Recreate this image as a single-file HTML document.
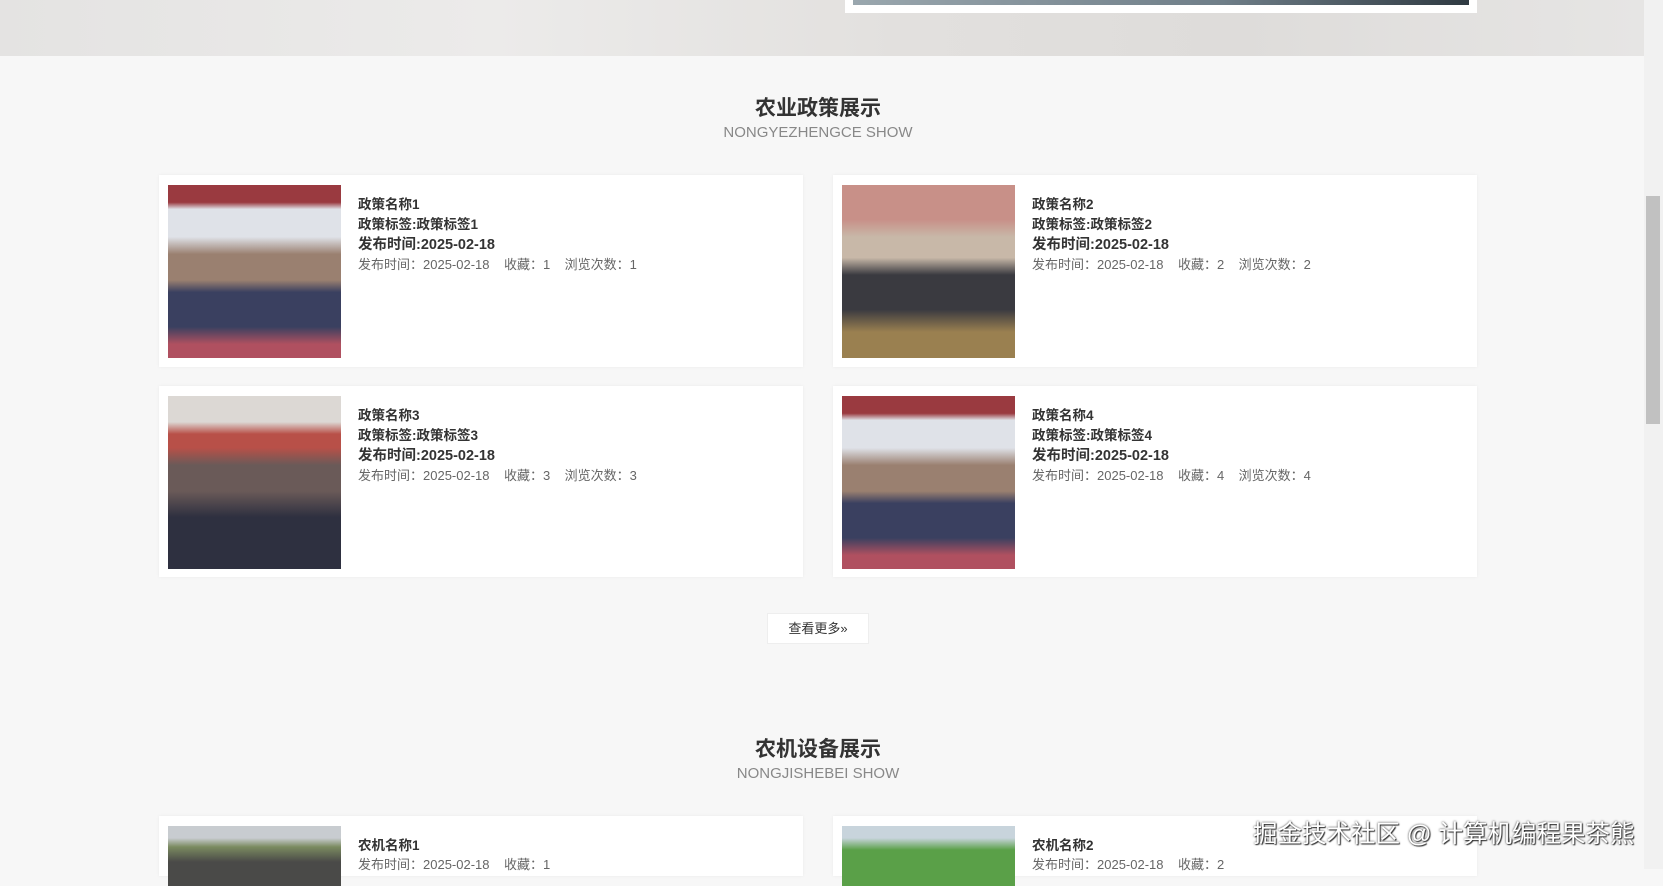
<!DOCTYPE html>
<html><head><meta charset="utf-8">
<style>
*{margin:0;padding:0;box-sizing:border-box}
body{width:1663px;height:869px;overflow:hidden;background:#f7f7f7;font-family:"Liberation Sans","Noto Sans CJK SC",sans-serif;position:relative}
.banner{position:absolute;left:0;top:0;width:1644px;height:56px;background:linear-gradient(90deg,#e4e3e2,#ecebea 30%,#e2e0de 55%,#dedcda 75%,#e6e5e4);}
.bbox{position:absolute;left:845px;top:0;width:632px;height:13px;background:#fff}
.bbox i{position:absolute;left:8px;right:8px;top:0;height:5px;background:linear-gradient(90deg,#9aa7ae,#6f7e88 60%,#2f3a42)}
.sb{position:absolute;left:1644px;top:0;width:19px;height:869px;background:#f1f1f1}
.sb i{position:absolute;left:2px;width:14px;top:196px;height:228px;background:#c1c1c1}
h2{position:absolute;left:0;width:1636px;text-align:center;font-size:21px;color:#333;font-weight:bold}
.sub{position:absolute;left:0;width:1636px;text-align:center;font-size:15px;color:#888}
.card{position:absolute;width:644px;background:#fff;box-shadow:0 0 3px rgba(0,0,0,.06)}
.img{position:absolute;left:9px;top:10px;width:173px;height:173px}
.t{position:absolute;left:199px;font-size:13.5px;color:#333}
.b{font-weight:bold}
.g{color:#666;font-size:13px}
.btn{position:absolute;left:767px;top:613px;width:102px;height:31px;background:#fff;border:1px solid #eee;font-size:13px;color:#333;text-align:center;line-height:29px}
.wm{position:absolute;left:1253px;top:815px;font-size:24.5px;color:#fff;text-shadow:0 0 2px #333,1px 1px 1px #333;white-space:nowrap}
</style></head><body>
<div class="banner"><div class="bbox"><i></i></div></div>
<div class="sb"><i></i></div>
<h2 style="top:92px">农业政策展示</h2>
<div class="sub" style="top:124px">NONGYEZHENGCE SHOW</div>

<div class="card" style="left:159px;top:175px;height:192px">
<div class="img" style="background:linear-gradient(180deg,#9a3a40 0 10%,#dfe2e8 14% 30%,#9a8070 40% 55%,#3a4060 62% 82%,#b05060 92%)"></div>
<div class="t b" style="top:18px">政策名称1</div><div class="t b" style="top:38px">政策标签:政策标签1</div><div class="t b" style="top:58px;font-size:14.5px">发布时间:2025-02-18</div><div class="t g" style="top:79px">发布时间：2025-02-18 &nbsp;&nbsp; 收藏：1 &nbsp;&nbsp; 浏览次数：1</div></div>

<div class="card" style="left:833px;top:175px;height:192px">
<div class="img" style="background:linear-gradient(180deg,#c89088 0 20%,#c8b8a8 30% 42%,#3a3a40 52% 72%,#9a8050 85%)"></div>
<div class="t b" style="top:18px">政策名称2</div><div class="t b" style="top:38px">政策标签:政策标签2</div><div class="t b" style="top:58px;font-size:14.5px">发布时间:2025-02-18</div><div class="t g" style="top:79px">发布时间：2025-02-18 &nbsp;&nbsp; 收藏：2 &nbsp;&nbsp; 浏览次数：2</div></div>

<div class="card" style="left:159px;top:386px;height:191px">
<div class="img" style="background:linear-gradient(180deg,#dcd8d4 0 15%,#b85048 22% 30%,#6a5a58 40% 55%,#2e3040 70%)"></div>
<div class="t b" style="top:18px">政策名称3</div><div class="t b" style="top:38px">政策标签:政策标签3</div><div class="t b" style="top:58px;font-size:14.5px">发布时间:2025-02-18</div><div class="t g" style="top:79px">发布时间：2025-02-18 &nbsp;&nbsp; 收藏：3 &nbsp;&nbsp; 浏览次数：3</div></div>

<div class="card" style="left:833px;top:386px;height:191px">
<div class="img" style="background:linear-gradient(180deg,#9a3a40 0 10%,#dfe2e8 14% 30%,#9a8070 40% 55%,#3a4060 62% 82%,#b05060 92%)"></div>
<div class="t b" style="top:18px">政策名称4</div><div class="t b" style="top:38px">政策标签:政策标签4</div><div class="t b" style="top:58px;font-size:14.5px">发布时间:2025-02-18</div><div class="t g" style="top:79px">发布时间：2025-02-18 &nbsp;&nbsp; 收藏：4 &nbsp;&nbsp; 浏览次数：4</div></div>

<div class="btn">查看更多»</div>

<h2 style="top:733px">农机设备展示</h2>
<div class="sub" style="top:765px">NONGJISHEBEI SHOW</div>

<div class="card" style="left:159px;top:816px;height:60px">
<div class="img" style="height:60px;background:linear-gradient(180deg,#c8ccd0 0 20%,#7a8a60 35%,#4a4a48 60%)"></div>
<div class="t b" style="top:18px">农机名称1</div><div class="t g" style="top:38px">发布时间：2025-02-18 &nbsp;&nbsp; 收藏：1</div></div>
<div class="card" style="left:833px;top:816px;height:60px">
<div class="img" style="height:60px;background:linear-gradient(180deg,#c8d4dc 0 20%,#5aa048 40%)"></div>
<div class="t b" style="top:18px">农机名称2</div><div class="t g" style="top:38px">发布时间：2025-02-18 &nbsp;&nbsp; 收藏：2</div></div>

<div class="wm">掘金技术社区 @ 计算机编程果茶熊</div>
</body></html>
